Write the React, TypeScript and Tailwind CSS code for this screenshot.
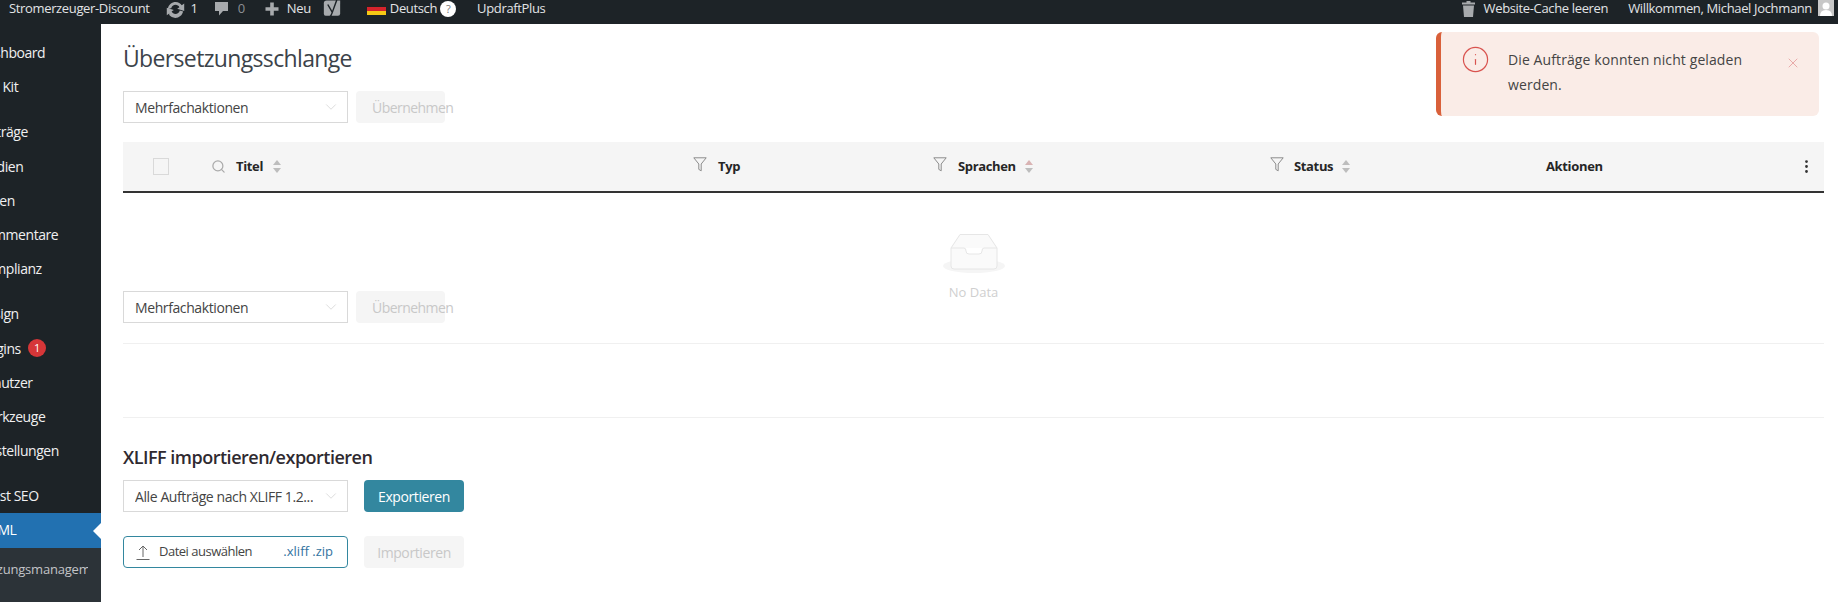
import { useState } from 'react'
import { ChevronDown, Info, Search, X, MoreVertical } from 'lucide-react'

const menuGroups = [
  { items: ['Dashboard', 'Site Kit'] },
  { items: ['Beiträge', 'Medien', 'Seiten', 'Kommentare', 'Complianz'] },
  { items: ['Design', 'Plugins', 'Benutzer', 'Werkzeuge', 'Einstellungen'] },
  { items: ['Yoast SEO'] },
]

function SortArrows({ active = false }: { active?: boolean }) {
  return (
    <svg width="8" height="15" viewBox="0 0 8 15" className="shrink-0">
      <path d="M4 1 L8 6 H0 Z" fill={active ? '#d9b3b3' : '#bdbdbd'} />
      <path d="M4 14 L0 9 H8 Z" fill="#bdbdbd" />
    </svg>
  )
}

function FilterIcon() {
  return (
    <svg width="14" height="15" viewBox="0 0 14 15" fill="none" stroke="#8c8c8c" strokeWidth="1" className="shrink-0 -mt-[4px]">
      <path d="M0.8 0.8 H13.2 L8.2 7 V13.8 L5.8 12.4 V7 Z" />
    </svg>
  )
}

function SelectBox({ label }: { label: string }) {
  return (
    <div className="flex h-8 w-[225px] items-center justify-between border border-[#d9d9d9] bg-white pr-[7px] pl-[11px] text-[14px] tracking-[-0.4px] text-[#444]">
      <span className="truncate">{label}</span>
      <ChevronDown className="h-[18px] w-[18px] shrink-0 text-[#d0d0d0]" strokeWidth={1} />
    </div>
  )
}

function BulkRow() {
  return (
    <div className="flex gap-2">
      <SelectBox label="Mehrfachaktionen" />
      <div className="flex h-8 w-[89px] items-center rounded-sm bg-[#f5f5f5] pl-4 text-[14px] tracking-[-0.55px] whitespace-nowrap text-[#c8c8c8]">
        Übernehmen
      </div>
    </div>
  )
}

function EmptyBox() {
  return (
    <svg width="64" height="41" viewBox="0 0 64 41" fill="none">
      <ellipse cx="32" cy="33" rx="31" ry="7" fill="#f5f5f5" />
      <path d="M9 15 L18 1.500 H46 L55 15 V33 Q55 36 52 36 H12 Q9 36 9 33 Z" fill="#fafafa" stroke="#e6e6e6" strokeWidth="1" />
      <path d="M9 15 H22 Q24 15 24 18 Q24 21 27 21 H37 Q40 21 40 18 Q40 15 42 15 H55" fill="#fff" stroke="#e6e6e6" strokeWidth="1" />
    </svg>
  )
}

export default function App() {
  const [showNotice, setShowNotice] = useState(true)

  return (
    <div className="flex h-[602px] w-[1838px] flex-col overflow-hidden bg-white font-['Open_Sans',sans-serif]">
      {/* Admin bar */}
      <div className="flex h-6 shrink-0 items-center bg-[#1d2327] pr-1 pb-[6px] text-[13px] tracking-[-0.35px] whitespace-nowrap text-[#e2e4e6]">
        <span className="ml-[9px]">Stromerzeuger-Discount</span>
        <svg width="19" height="17" viewBox="1.500 3 17 14" fill="#a7aaad" className="ml-[16px]">
          <path d="M10.200 3.300c2.300 0 4.300 1.200 5.400 3l2.200-1.600v6.600l-6.300-2 2-1.400c-.7-1.300-2-2.100-3.400-2.100-1.900 0-3.500 1.300-3.900 3.100L3.200 9c.7-3.300 3.600-5.700 7-5.700zM4.400 13.500l-2.200 1.600V8.500l6.300 2-2 1.400c.7 1.300 2 2.100 3.400 2.100 1.900 0 3.500-1.300 3.900-3.100l3 .9c-.7 3.300-3.600 5.700-7 5.700-2.200 0-4.300-1.100-5.400-2.500z" />
        </svg>
        <span className="ml-[6px]">1</span>
        <svg width="15" height="16" viewBox="0 0 15 16" fill="#a7aaad" className="ml-[16px]">
          <path d="M1 1 H14 V10 H9 L5 14.500 V10 H1 Z" />
        </svg>
        <span className="ml-[9px] text-[#8c8f94]">0</span>
        <svg width="14" height="14" viewBox="0 0 14 14" fill="#a7aaad" className="ml-[20px]">
          <path d="M5.200 0.500 H8.800 V5.200 H13.500 V8.800 H8.800 V13.500 H5.200 V8.800 H0.500 V5.200 H5.200 Z" />
        </svg>
        <span className="ml-2">Neu</span>
        <svg width="18" height="18" viewBox="1.500 1 14.500 16" className="ml-3 shrink-0">
          <path d="M4 1.500 H16 V13 Q16 15 14 15 H3 Q1.500 15 1.500 13 V4 Q1.500 1.500 4 1.500 Z" fill="#a7aaad" />
          <path d="M5 5 L9 12 L13 1 M9 12 Q8 16 5 17" fill="none" stroke="#1d2327" strokeWidth="1.300" />
        </svg>
        <svg width="19" height="12" viewBox="0 0 19 12" className="ml-[26px]">
          <rect width="19" height="4" fill="#222" />
          <rect y="4" width="19" height="4" fill="#d5232b" />
          <rect y="8" width="19" height="4" fill="#f6c915" />
        </svg>
        <span className="ml-1">Deutsch</span>
        <span className="ml-[3px] flex h-4 w-4 items-center justify-center rounded-full bg-white text-[11px] text-[#777]">?</span>
        <span className="ml-[21px]">UpdraftPlus</span>
        <svg width="13" height="16" viewBox="0 0 13 16" fill="#a7aaad" className="ml-auto">
          <path d="M4.500 0 H8.500 V1.500 H13 V3.500 H0 V1.500 H4.500 Z M1 4.500 H12 L11 16 H2 Z" />
        </svg>
        <span className="ml-[9px]">Website-Cache leeren</span>
        <span className="ml-5">Willkommen, Michael Jochmann</span>
        <svg width="16" height="16" viewBox="0 0 16 16" className="mb-[2px] ml-[6px] shrink-0">
          <rect width="16" height="16" fill="#c8c8c8" />
          <circle cx="8" cy="6" r="3.500" fill="#fff" />
          <path d="M2 16 Q2 10 8 10 Q14 10 14 16 Z" fill="#fff" />
        </svg>
      </div>

      <div className="flex min-h-0 flex-1">
        {/* Sidebar, pushed off the left edge like in the screenshot */}
        <div className="flex w-[101px] shrink-0 flex-col overflow-hidden bg-[#1d2327] pt-[11.5px] text-[14px] tracking-[-0.45px] whitespace-nowrap text-[#f0f0f1]">
          {menuGroups.map((group, i) => (
            <div key={i} className="mb-[11px]">
              {group.items.map((item) => (
                <div key={item} className="-ml-[23px] flex h-[34.2px] items-center">
                  <span>{item}</span>
                  {item === 'Plugins' && (
                    <span className="ml-[7px] flex h-[18px] w-[18px] items-center justify-center rounded-full bg-[#d63638] text-[11px] text-white">1</span>
                  )}
                </div>
              ))}
            </div>
          ))}
          <div className="relative -mt-[10.5px] flex h-[35px] shrink-0 items-center bg-[#2271b1] pb-[2px] text-white">
            <span className="-ml-[23px]">WPML</span>
            <span className="absolute top-[10px] right-0 h-0 w-0 border-y-[8px] border-r-[8px] border-y-transparent border-r-white" />
          </div>
          <div className="flex-1 bg-[#2c3338] pt-[12px] text-[13px] leading-[18px] tracking-[-0.2px] text-[#c3c4c7]">
            <div className="-ml-[50px] w-[138px] overflow-hidden">Übersetzungsmanagement</div>
          </div>
        </div>

        {/* Main */}
        <div className="relative min-w-0 flex-1 pt-4 pr-[14px] pl-[22px]">
          <h1 className="text-[23px] leading-9 font-normal tracking-[-0.65px] text-[#3c434a]">Übersetzungsschlange</h1>
          <div className="mt-[15px]">
            <BulkRow />
          </div>

          <div className="relative mt-[19px]">
            <div className="flex h-[51px] items-center border-b-2 border-[#333] bg-[#f5f5f5] text-[13px] font-bold tracking-[-0.35px] text-[#262626]">
              <div className="flex w-[89px] shrink-0 pl-[30px]">
                <div className="h-[17px] w-4 border border-[#d9d9d9] bg-[#f5f5f5]" />
              </div>
              <div className="flex w-[481px] shrink-0 items-center">
                <Search className="-ml-[1px] h-[15px] w-[15px] text-[#aaa]" strokeWidth={2} />
                <span className="ml-[10px]">Titel</span>
                <span className="ml-[10px]"><SortArrows /></span>
              </div>
              <div className="flex w-[240px] shrink-0 items-center">
                <FilterIcon />
                <span className="ml-[11px]">Typ</span>
              </div>
              <div className="flex w-[337px] shrink-0 items-center">
                <FilterIcon />
                <span className="ml-[11px]">Sprachen</span>
                <span className="ml-[9px]"><SortArrows active /></span>
              </div>
              <div className="flex w-[276px] shrink-0 items-center">
                <FilterIcon />
                <span className="ml-[10px]">Status</span>
                <span className="ml-[9px]"><SortArrows /></span>
              </div>
              <div className="flex flex-1 items-center justify-between pr-[9px]">
                <span>Aktionen</span>
                <MoreVertical className="h-[17px] w-[17px] text-[#333]" strokeWidth={2} />
              </div>
            </div>

            {/* Empty state sits over the bulk action row */}
            <div className="absolute top-[91px] left-0 flex w-full flex-col items-center">
              <EmptyBox />
              <span className="mt-[9px] text-[13px] text-[#cfcfcf]">No Data</span>
            </div>

            <div className="pt-[98px]">
              <BulkRow />
            </div>
            <div className="mt-5 border-t border-[#f0f0f0]" />
          </div>

          <div className="mt-[73px] border-t border-[#f0f0f0] pt-[25px]">
            <h2 className="text-[18px] leading-7 font-semibold tracking-[-0.5px] text-[#2f2a30]">XLIFF importieren/exportieren</h2>
            <div className="mt-[9px] flex gap-4">
              <SelectBox label="Alle Aufträge nach XLIFF 1.2..." />
              <div className="flex h-8 w-[100px] items-center justify-center rounded-sm bg-[#33879f] text-[14px] tracking-[-0.4px] text-white">Exportieren</div>
            </div>
            <div className="mt-6 flex gap-4">
              <div className="flex h-8 w-[225px] items-center rounded-sm border border-[#33879f] pr-[14px] pl-[12px] text-[13px] text-[#444]">
                <svg width="14" height="15" viewBox="0 0 14 15" fill="none" stroke="#666" strokeWidth="1" className="shrink-0">
                  <path d="M7 12 V1 M3 5 L7 1 L11 5 M0.500 14.500 H13.500" />
                </svg>
                <span className="ml-[9px] tracking-[-0.5px]">Datei auswählen</span>
                <span className="ml-auto text-[#33739f]">.xliff .zip</span>
              </div>
              <div className="flex h-8 w-[100px] items-center justify-center rounded-sm bg-[#f5f5f5] text-[14px] tracking-[-0.4px] text-[#c8c8c8]">Importieren</div>
            </div>
          </div>

          {/* Toast */}
          {showNotice && (
            <div className="absolute top-2 right-[19px] flex h-[84px] w-[383px] rounded-md border-l-[5px] border-[#d9603a] bg-[#faece7] pt-[15px] pl-[20px] text-[14px] leading-[25px] tracking-[0.1px] text-[#444]">
              <Info className="-mt-[2px] h-[29px] w-[29px] shrink-0 text-[#d9534f]" strokeWidth={1} />
              <p className="ml-[18px] w-[250px]">Die Aufträge konnten nicht geladen werden.</p>
              <button onClick={() => setShowNotice(false)} className="mt-2 ml-[27px] h-fit">
                <X className="h-4 w-4 text-[#e08a8a]" strokeWidth={1} />
              </button>
            </div>
          )}
        </div>
      </div>
    </div>
  )
}
